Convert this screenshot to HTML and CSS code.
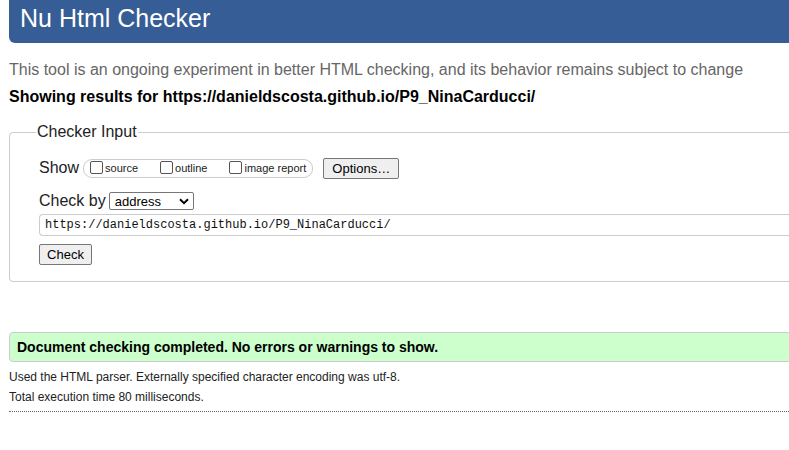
FILE: index.html
```html
<!DOCTYPE html>
<html>
<head>
<meta charset="utf-8">
<link rel="stylesheet" href="styles.css">
</head>
<body>
<div class="page">
  <h1 class="banner">Nu Html Checker</h1>
  <p class="intro">This tool is an ongoing experiment in better HTML checking, and its behavior remains subject to change</p>
  <p class="showing">Showing results for https://danieldscosta.github.io/P9_NinaCarducci/</p>
  <fieldset class="checker">
    <legend class="legend">Checker Input</legend>
    <div class="row show-row">
      <span class="lbl">Show</span>
      <span class="group">
        <label class="opt"><span class="cb"></span>source</label>
        <label class="opt"><span class="cb"></span>outline</label>
        <label class="opt"><span class="cb"></span>image report</label>
      </span>
      <span class="btn options">Options…</span>
    </div>
    <div class="row by-row">
      <span class="lbl">Check by</span>
      <span class="select">address
        <svg class="chev" width="10" height="7" viewBox="0 0 10 7"><path d="M1 1.2 L5 5.2 L9 1.2" fill="none" stroke="#000" stroke-width="2"/></svg>
      </span>
    </div>
    <div class="url">https://danieldscosta.github.io/P9_NinaCarducci/</div>
    <div class="row"><span class="btn check">Check</span></div>
  </fieldset>
  <div class="success">Document checking completed. No errors or warnings to show.</div>
  <p class="meta first">Used the HTML parser. Externally specified character encoding was utf-8.</p>
  <p class="meta">Total execution time 80 milliseconds.</p>
  <div class="rule"></div>
</div>
</body>
</html>
```
FILE: styles.css
```css
html, body {
  margin: 0;
  padding: 0;
  background: #fff;
  overflow: hidden;
}
body {
  font-family: "Liberation Sans", Arial, sans-serif;
  color: #000;
}
.page {
  padding-left: 9px;
  margin-right: -40px;
}
.banner {
  margin: -6px 0 0 0;
  background: #365d95;
  color: #fff;
  font-weight: normal;
  font-size: 25px;
  line-height: 49px;
  padding-left: 11px;
  border-radius: 6px;
}
.intro {
  margin: 14px 0 0 0;
  color: #666;
  font-size: 16px;
  line-height: 26px;
}
.showing {
  margin: 4px 0 0 0;
  font-weight: bold;
  font-size: 16px;
  line-height: 20px;
}
.checker {
  margin: 16px 0 0 0;
  border: 1px solid #ccc;
  border-radius: 4px;
  padding: 4px 0 16px 29px;
}
.legend {
  font-size: 16px;
  padding: 0 1px;
  margin-left: -3px;
  color: #222;
}
.row {
  display: flex;
  align-items: center;
}
.lbl {
  font-size: 16px;
  color: #222;
}
.show-row {
  margin-top: 13px;
  height: 20px;
}
.group {
  margin-left: 4px;
  display: flex;
  align-items: center;
  height: 17px;
  border: 1px solid #ccc;
  border-radius: 9px;
  padding: 0 6px 0 6px;
  gap: 22px;
}
.opt {
  display: flex;
  align-items: center;
  font-size: 11px;
  color: #222;
}
.cb {
  width: 11px;
  height: 11px;
  border: 1px solid #555;
  border-radius: 2px;
  margin-right: 2px;
  margin-top: -2px;
  box-sizing: content-box;
}
.btn {
  display: inline-flex;
  align-items: center;
  justify-content: center;
  border: 1px solid #767676;
  border-radius: 2px;
  background: #efefef;
  font-size: 13px;
  color: #000;
  box-sizing: border-box;
}
.options {
  margin-left: 10px;
  width: 76px;
  height: 21px;
}
.by-row {
  margin-top: 13px;
  height: 20px;
}
.select {
  margin-left: 3px;
  width: 85px;
  height: 18px;
  box-sizing: border-box;
  border: 1px solid #767676;
  border-radius: 2px;
  font-size: 13px;
  padding-left: 5px;
  display: flex;
  align-items: center;
  justify-content: space-between;
  padding-right: 4px;
}
.url {
  margin-top: 3px;
  height: 22px;
  box-sizing: border-box;
  border: 1px solid #ccc;
  border-right: none;
  border-radius: 4px 0 0 4px;
  font-family: "Liberation Mono", "DejaVu Sans Mono", monospace;
  font-size: 12px;
  line-height: 20px;
  padding-left: 5px;
  color: #111;
}
.check {
  margin-top: 8px;
  width: 53px;
  height: 21px;
}
.success {
  margin-top: 50px;
  height: 30px;
  box-sizing: border-box;
  background: #ccffcc;
  border: 1px solid #ccc;
  border-radius: 4px;
  font-weight: bold;
  font-size: 14px;
  line-height: 28px;
  padding-left: 7px;
}
.meta {
  margin: 0;
  font-size: 12px;
  line-height: 20px;
  color: #222;
}
.meta.first {
  margin-top: 5px;
}
.rule {
  margin-top: 4px;
  border-top: 1px dotted #666;
}
```
